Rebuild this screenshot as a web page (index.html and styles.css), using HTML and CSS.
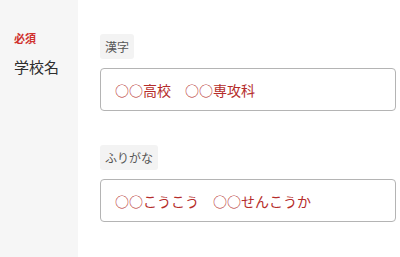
FILE: index.html
```html
<!DOCTYPE html>
<html lang="ja">
<head>
<meta charset="utf-8">
<link rel="stylesheet" href="styles.css">
</head>
<body>
<div class="row">
  <div class="head">
    <span class="req">必須</span>
    <span class="name">学校名</span>
  </div>
  <div class="fields">
    <div class="field">
      <span class="chip">漢字</span>
      <input class="box" type="text" placeholder="○○高校　○○専攻科">
    </div>
    <div class="field">
      <span class="chip">ふりがな</span>
      <input class="box" type="text" placeholder="○○こうこう　○○せんこうか">
    </div>
  </div>
</div>
</body>
</html>
```
FILE: styles.css
```css
html, body {
  margin: 0;
  padding: 0;
  background: #fff;
}
body {
  font-family: "Noto Sans CJK JP", "Noto Sans", sans-serif;
}
.row {
  display: flex;
  height: 257px;
}
.head {
  width: 64px;
  padding: 30px 0 0 14px;
  background: #f6f6f6;
  display: flex;
  flex-direction: column;
}
.req {
  color: #d0312d;
  font-size: 11px;
  font-weight: 700;
  line-height: 16px;
}
.name {
  margin-top: 10px;
  color: #2e2e2e;
  font-size: 15px;
  line-height: 22px;
}
.fields {
  flex: 1;
  padding: 34px 4px 0 22px;
  display: flex;
  flex-direction: column;
  gap: 34px;
}
.field {
  display: flex;
  flex-direction: column;
  align-items: flex-start;
  gap: 9px;
}
.chip {
  background: #f3f3f3;
  color: #555;
  font-size: 12px;
  line-height: 15px;
  padding: 5px 5px;
  border-radius: 3px;
}
.box {
  box-sizing: border-box;
  width: 100%;
  height: 43px;
  margin: 0;
  padding: 1px 14px 0;
  border: 1px solid #b4b4b4;
  border-radius: 4px;
  font-family: "Noto Sans CJK JP", sans-serif;
  font-size: 14px;
  color: #b52d2b;
  background: #fff;
  outline: none;
}
.box::placeholder {
  color: #b52d2b;
  opacity: 1;
}
```
